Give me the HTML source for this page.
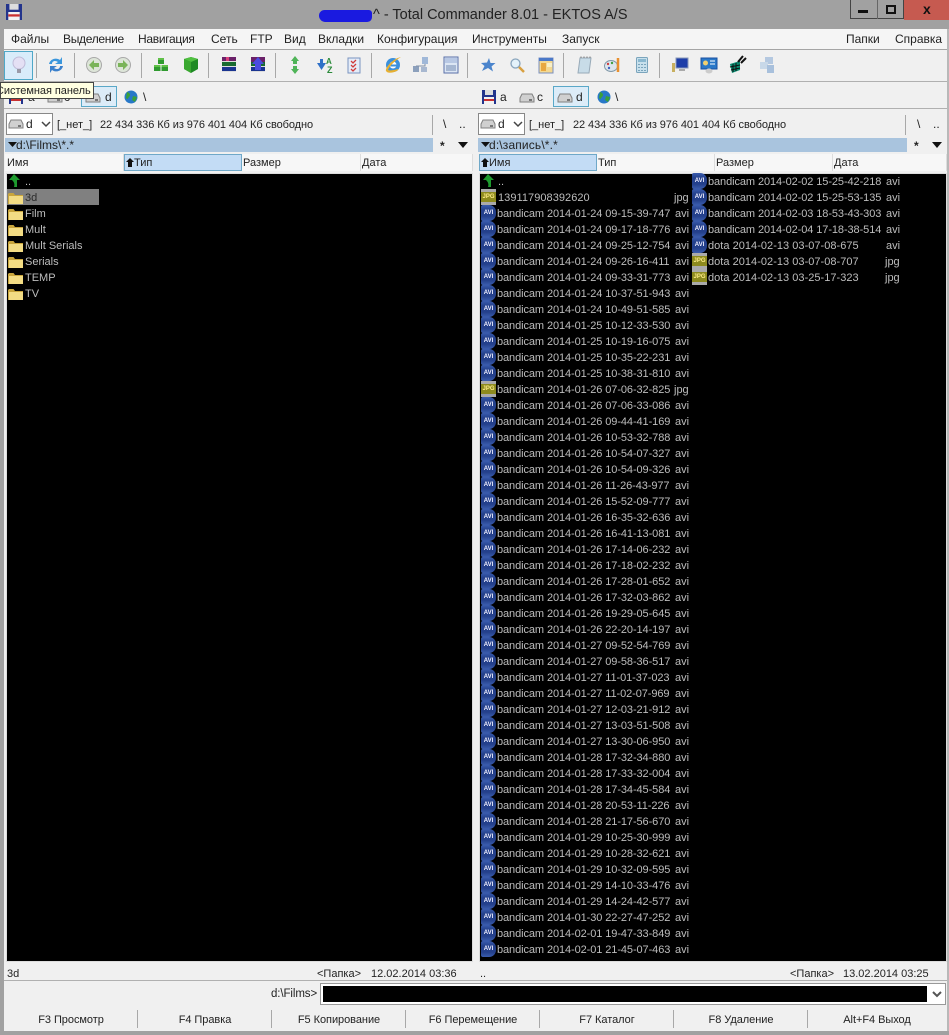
<!DOCTYPE html>
<html><head><meta charset="utf-8"><title>Total Commander</title>
<style>
html,body{margin:0;padding:0;width:949px;height:1035px;overflow:hidden;background:#f0f0f0}
body{position:relative;font-family:"Liberation Sans","Noto Sans CJK SC",sans-serif;font-size:11px;color:#222}
.a{position:absolute}
.t{position:absolute;white-space:nowrap;line-height:14px}
.m{position:absolute;top:32px;font-size:12px;line-height:14px;color:#222;white-space:nowrap}
.v{position:absolute;width:1px;background:#a8a8a8}
.ic{position:absolute;top:55px;width:20px;height:20px}
.col{position:absolute;top:173px;width:211px;color:#bdbdbd}
.col p{position:relative;margin:0;height:16px;line-height:16px;white-space:nowrap}
.col b{position:absolute;left:16px;top:1px;font-weight:400;letter-spacing:-.09px}
.col u{position:absolute;left:194px;top:1px;text-decoration:none}
.col i{position:absolute;left:0;top:0;width:15px;height:16px;font:bold 6px/16px "Liberation Sans",sans-serif;text-align:center;overflow:hidden;font-style:normal}
i.f{background:linear-gradient(#3a5cae,#24408c 30% 70%,#3a5cae);color:#eef;border-radius:2px 7px 7px 2px}
i.j{background:linear-gradient(#aaa 0 3px,#8d8a1e 3px 13px,#aaa 13px);color:#ffee88}
.h{position:absolute;top:154px;height:17px;line-height:19px;white-space:nowrap;background:#f7f7f7;border-right:1px solid #ddd;box-sizing:border-box;padding-left:1px}
.hs{background:#c3dcf5;border:1px solid #6fa8c8;line-height:17px}
.pn{position:absolute;top:173px;height:787px;background:#000;border:1px solid #ddd}
.k{position:absolute;top:1013px;width:134px;text-align:center;line-height:14px;letter-spacing:-.05px}
.fo{position:absolute;left:8px;width:16px;height:14px}
.i{letter-spacing:-.08px}
</style></head>
<body>
<svg width="0" height="0" style="position:absolute">
<symbol id="folder" viewBox="0 0 16 14"><path d="M0 3V13H15V4H7L5.500 2H1Z" fill="#c9a53c"/><path d="M1 5H15V13H1Z" fill="#f3dc84"/></symbol>
<symbol id="up" viewBox="0 0 14 14"><path d="M6 0L12 6H9V13H6C7 10 6 8 4 6H1Z" fill="#1e9a2e"/></symbol>
<symbol id="hdd" viewBox="0 0 16 10"><path d="M3 1H13L15 5V9H1V5Z" fill="#d0d0d0" stroke="#808080"/><rect x="10" y="6" width="3" height="2" fill="#777"/></symbol>
<symbol id="globe" viewBox="0 0 14 14"><circle cx="7" cy="7" r="6.500" fill="#2878c8"/><path d="M3 2C6 3 7 5 5 7S4 10 2 8ZM9 6L13 7 11 12 8 10Z" fill="#3aa03a"/></symbol>
<symbol id="floppy" viewBox="0 0 14 14"><rect width="14" height="14" fill="#23348c"/><rect x="3" y="0" width="8" height="5" fill="#ddd"/><rect x="2" y="7" width="10" height="7" fill="#f2f2f2"/><rect x="2" y="9" width="10" height="2" fill="#c83030"/></symbol>
</svg>

<!-- window frame -->
<div class="a" style="left:0;top:0;width:949px;height:29px;background:#a1a1a1"></div>
<div class="a" style="left:0;top:29px;width:4px;height:1006px;background:#a1a1a1"></div>
<div class="a" style="left:947px;top:29px;width:2px;height:1006px;background:#b8b8b8"></div>
<div class="a" style="left:0;top:1031px;width:949px;height:4px;background:#a1a1a1"></div>
<svg class="a" style="left:6px;top:4px" width="16" height="16" viewBox="0 0 14 14"><use href="#floppy"/></svg>
<div class="a" style="left:319px;top:10px;width:53px;height:12px;background:#1a1ae0;border-radius:7px 4px 6px 8px"></div>
<div class="t" style="left:373px;top:6px;font-size:14.500px;line-height:18px;color:#222">^ - Total Commander 8.01 - EKTOS A/S</div>
<div class="a" style="left:850px;top:0;width:54px;height:19px;border:1px solid #444;border-top:0;box-sizing:border-box;background:#a1a1a1"></div>
<div class="a" style="left:877px;top:0;width:1px;height:19px;background:#666"></div>
<div class="a" style="left:904px;top:0;width:45px;height:20px;background:#c65a50"></div>
<div class="a" style="left:858px;top:10px;width:10px;height:3px;background:#111"></div>
<div class="a" style="left:886px;top:5px;width:10px;height:9px;border:2px solid #111;box-sizing:border-box"></div>
<div class="t" style="left:923px;top:2px;font-size:14px;font-weight:bold;color:#111">x</div>

<!-- menu -->
<div class="a" style="left:4px;top:29px;width:943px;height:20px;background:#f5f5f5"></div>
<div class="a" style="left:4px;top:49px;width:943px;height:1px;background:#a5a5a5"></div>
<div class="m" style="left:11px">Файлы</div><div class="m" style="left:63px;letter-spacing:-.3px">Выделение</div><div class="m" style="left:138px;letter-spacing:-.3px">Навигация</div><div class="m" style="left:211px">Сеть</div><div class="m" style="left:250px">FTP</div><div class="m" style="left:284px">Вид</div><div class="m" style="left:318px">Вкладки</div><div class="m" style="left:377px">Конфигурация</div><div class="m" style="left:472px">Инструменты</div><div class="m" style="left:562px">Запуск</div><div class="m" style="left:846px">Папки</div><div class="m" style="left:895px">Справка</div>

<!-- toolbar -->
<div class="a" style="left:4px;top:51px;width:29px;height:29px;background:#d9ecfa;border:1px solid #4fa8c8;box-sizing:border-box"></div>
<div class="a" style="left:4px;top:81px;width:943px;height:1px;background:#b0b0b0"></div>
<div class="v" style="left:36px;top:53px;height:25px"></div><div class="v" style="left:74px;top:53px;height:25px"></div><div class="v" style="left:141px;top:53px;height:25px"></div><div class="v" style="left:208px;top:53px;height:25px"></div><div class="v" style="left:275px;top:53px;height:25px"></div><div class="v" style="left:371px;top:53px;height:25px"></div><div class="v" style="left:467px;top:53px;height:25px"></div><div class="v" style="left:563px;top:53px;height:25px"></div><div class="v" style="left:659px;top:53px;height:25px"></div>

<svg class="ic" style="left:9px" viewBox="0 0 20 20"><circle cx="10" cy="8" r="6" fill="#e4e0f4" stroke="#c0bcd8"/><rect x="8" y="14" width="4" height="4" fill="#9a9aa8"/></svg>
<svg class="ic" style="left:46px" viewBox="0 0 20 20"><path d="M3 9C4 4 10 2 14 5L16 2V9H9L12 7C9 5 6 6 6 9Z" fill="#3a96dc"/><path d="M17 11C16 16 10 18 6 15L4 18V11H11L8 13C11 15 14 14 14 11Z" fill="#3a80cc"/></svg>
<svg class="ic" style="left:84px" viewBox="0 0 20 20"><circle cx="10" cy="10" r="7.500" fill="#dde5d8" stroke="#a8a8a8"/><path d="M5 10L10 5V8H15V12H10V15Z" fill="#7ab458"/></svg>
<svg class="ic" style="left:113px" viewBox="0 0 20 20"><circle cx="10" cy="10" r="7.500" fill="#dde5d8" stroke="#a8a8a8"/><path d="M15 10L10 5V8H5V12H10V15Z" fill="#7ab458"/></svg>
<svg class="ic" style="left:151px" viewBox="0 0 20 20"><path d="M7 3H13V9H7ZM3 10H9.500V16H3ZM10.500 10H17V16H10.500Z" fill="#2f9a2f"/><path d="M7 3H13V5H7ZM3 10H9.500V12H3ZM10.500 10H17V12H10.500Z" fill="#60c048"/></svg>
<svg class="ic" style="left:181px" viewBox="0 0 20 20"><path d="M3 4L10 2 17 4V14L10 18 3 14Z" fill="#1f8a24"/><path d="M3 4L10 2 17 4 10 7Z" fill="#50c040"/><path d="M10 7V18L3 14V4Z" fill="#3aa830"/></svg>
<svg class="ic" style="left:219px" viewBox="0 0 20 20"><rect x="3" y="2" width="14" height="5" fill="#6a2068"/><rect x="3" y="7" width="14" height="5" fill="#186a30"/><rect x="3" y="12" width="14" height="5" fill="#1a3490"/><path d="M3 6.500H17M3 11.500H17M3 16.500H17" stroke="#ddd"/><path d="M7 2H10V6H7Z" fill="#d8407a"/></svg>
<svg class="ic" style="left:248px" viewBox="0 0 20 20"><rect x="3" y="2" width="14" height="5" fill="#6a2068"/><rect x="3" y="7" width="14" height="5" fill="#186a30"/><rect x="3" y="12" width="14" height="5" fill="#1a3490"/><path d="M3 11.500H17M3 16.500H17" stroke="#ddd"/><path d="M10 2L16 9H13V15H7V9H4Z" fill="#4b4be0"/></svg>
<svg class="ic" style="left:285px" viewBox="0 0 20 20"><path d="M10 1L14 6H12V9H8V6H6ZM10 19L6 14H8V11H12V14H14Z" fill="#4fb458"/></svg>
<svg class="ic" style="left:315px" viewBox="0 0 20 20"><path d="M2 8H5V4H8V8H11L6.500 15Z" fill="#2f70c8"/><text x="11" y="9" font-size="8" font-weight="bold" fill="#2a8a3a" font-family="Liberation Sans">A</text><text x="12" y="18" font-size="9" font-weight="bold" fill="#2a8a3a" font-family="Liberation Sans">Z</text></svg>
<svg class="ic" style="left:344px" viewBox="0 0 20 20"><rect x="4" y="3" width="12" height="15" fill="#e4ecf8" stroke="#7a94c0"/><path d="M7 6L9 8 12 5M7 10L9 12 12 9M7 14L9 16 12 13" stroke="#d03a3a" fill="none" stroke-width="1.300"/></svg>
<svg class="ic" style="left:383px" viewBox="0 0 20 20"><circle cx="10" cy="10" r="7" fill="#3a90dc"/><circle cx="10" cy="10" r="3.500" fill="#fff"/><rect x="5" y="9.500" width="11" height="2" fill="#3a90dc"/><path d="M15 14C17 16 5 20 3 16 2 13 9 4 18 2 11 6 6 12 5 15 6 16 12 15 15 14Z" fill="#e8b030"/></svg>
<svg class="ic" style="left:411px" viewBox="0 0 20 20"><rect x="11" y="2" width="6" height="7" fill="#a0b8d8"/><rect x="2" y="11" width="6" height="6" fill="#8ca0bc"/><rect x="10" y="12" width="6" height="5" fill="#a8b8d0"/><path d="M14 9V11H5V11" stroke="#8090a8" fill="none"/></svg>
<svg class="ic" style="left:441px" viewBox="0 0 20 20"><rect x="3" y="2" width="14" height="16" fill="#dce6f4" stroke="#5a70a8"/><rect x="4" y="3" width="12" height="5" fill="#b8c8e4"/><path d="M5 11H15M5 13H15M5 15H15" stroke="#7088b0"/></svg>
<svg class="ic" style="left:478px" viewBox="0 0 20 20"><path d="M11 3L12.500 8 17.500 8 13.500 11.500 15 16.500 10 13 4 16 6.500 11 3 8 9 7.500Z" fill="#4a84cc"/></svg>
<svg class="ic" style="left:507px" viewBox="0 0 20 20"><circle cx="8.500" cy="8.500" r="4.500" fill="#e4f2fa" stroke="#88a4bc" stroke-width="1.300"/><path d="M12 12L17 17" stroke="#d8a040" stroke-width="2.500"/></svg>
<svg class="ic" style="left:536px" viewBox="0 0 20 20"><rect x="3" y="3" width="14" height="15" fill="#f4d890" stroke="#7a90c0"/><rect x="3" y="3" width="14" height="3" fill="#4a78c8"/><rect x="5" y="8" width="5" height="8" fill="#e8a840"/><rect x="11" y="8" width="5" height="4" fill="#f8f0c8"/></svg>
<svg class="ic" style="left:574px" viewBox="0 0 20 20"><path d="M6 3H17L15 18H4Z" fill="#c8dce8" stroke="#98aab8"/><path d="M7 3V1.500M10 3V1.500M13 3V1.500M16 3V1.500" stroke="#777"/></svg>
<svg class="ic" style="left:603px" viewBox="0 0 20 20"><ellipse cx="8" cy="11" rx="6.500" ry="5.500" fill="#dce6ee" stroke="#8098a8"/><circle cx="5" cy="9" r="1.200" fill="#d04040"/><circle cx="9" cy="8" r="1.200" fill="#40a040"/><circle cx="6" cy="13" r="1.200" fill="#4060c0"/><path d="M15 3V17" stroke="#e89030" stroke-width="2.500"/></svg>
<svg class="ic" style="left:632px" viewBox="0 0 20 20"><rect x="4.500" y="2.500" width="11" height="15" rx="1" fill="#c8e0ec" stroke="#7aa4bc"/><rect x="6" y="4" width="8" height="3" fill="#8ab8d0"/><path d="M6 9.500H14M6 12.500H14M6 15.500H14" stroke="#7aa4bc" stroke-dasharray="2 1"/></svg>
<svg class="ic" style="left:670px" viewBox="0 0 20 20"><rect x="6" y="3" width="12" height="10" fill="#1e3ea8" stroke="#8898b8"/><rect x="2" y="8" width="3" height="9" fill="#c8b060"/><rect x="9" y="14" width="6" height="2" fill="#aaa"/></svg>
<svg class="ic" style="left:699px" viewBox="0 0 20 20"><rect x="2" y="3" width="16" height="11" fill="#2a78c8" stroke="#1a50a0"/><circle cx="6.500" cy="8" r="2.500" fill="#f0d070"/><path d="M11 6H16M11 9H16" stroke="#fff"/><ellipse cx="10" cy="16" rx="3.500" ry="2.500" fill="#ccc"/></svg>
<svg class="ic" style="left:728px" viewBox="0 0 20 20"><path d="M2 9L12 6V15L4 18Z" fill="#0a8a70"/><path d="M5 9V17M8 8V16M2 12L12 10M3 15L12 13" stroke="#111"/><path d="M10 7L15 1M13 8L18 3" stroke="#111" stroke-width="2"/></svg>
<svg class="ic" style="left:757px" viewBox="0 0 20 20"><rect x="8" y="2" width="8" height="7" fill="#b4c8e0"/><rect x="3" y="7" width="8" height="7" fill="#c8d8e8"/><rect x="10" y="10" width="7" height="8" fill="#a8c0dc"/></svg>

<!-- drive bars -->
<div class="a" style="left:4px;top:108px;width:943px;height:1px;background:#b0b0b0"></div>
<svg class="a" style="left:9px;top:90px" width="14" height="14"><use href="#floppy"/></svg>
<div class="t" style="left:28px;top:90px;font-size:12px">a</div>
<svg class="a" style="left:47px;top:93px" width="16" height="10"><use href="#hdd"/></svg>
<div class="t" style="left:64px;top:90px;font-size:12px">c</div>
<div class="a" style="left:81px;top:86px;width:36px;height:21px;background:#dcecf8;border:1px solid #5aa8c8;box-sizing:border-box"></div>
<svg class="a" style="left:85px;top:93px" width="16" height="10"><use href="#hdd"/></svg>
<div class="t" style="left:105px;top:90px;font-size:12px">d</div>
<svg class="a" style="left:124px;top:90px" width="14" height="14"><use href="#globe"/></svg>
<div class="t" style="left:143px;top:90px;font-size:12px">\</div>
<div class="t" style="left:0;top:82px;width:94px;height:17px;line-height:16px;background:#ffffe1;border:1px solid #444;box-sizing:border-box;overflow:hidden;text-indent:-5px;letter-spacing:-.05px;font-size:11px;z-index:3">Системная панель</div>

<svg class="a" style="left:482px;top:90px" width="14" height="14"><use href="#floppy"/></svg>
<div class="t" style="left:500px;top:90px;font-size:12px">a</div>
<svg class="a" style="left:519px;top:93px" width="16" height="10"><use href="#hdd"/></svg>
<div class="t" style="left:537px;top:90px;font-size:12px">c</div>
<div class="a" style="left:553px;top:86px;width:36px;height:21px;background:#dcecf8;border:1px solid #5aa8c8;box-sizing:border-box"></div>
<svg class="a" style="left:557px;top:93px" width="16" height="10"><use href="#hdd"/></svg>
<div class="t" style="left:576px;top:90px;font-size:12px">d</div>
<svg class="a" style="left:597px;top:90px" width="14" height="14"><use href="#globe"/></svg>
<div class="t" style="left:615px;top:90px;font-size:12px">\</div>

<!-- info row left -->
<div class="a" style="left:6px;top:113px;width:47px;height:22px;background:#fff;border:1px solid #888;box-sizing:border-box"></div>
<svg class="a" style="left:8px;top:119px" width="16" height="10"><use href="#hdd"/></svg>
<div class="t" style="left:26px;top:117px;font-size:12px">d</div>
<svg class="a" style="left:41px;top:120px" width="10" height="8"><path d="M1 2L5 6 9 2" stroke="#444" stroke-width="1.500" fill="none"/></svg>
<div class="t" style="left:57px;top:118px">[_нет_]</div>
<div class="t i" style="left:100px;top:118px">22 434 336 Кб из 976 401 404 Кб свободно</div>
<div class="t" style="left:443px;top:117px;font-size:12px">\</div><div class="t" style="left:459px;top:117px;font-size:12px">..</div>
<div class="v" style="left:432px;top:115px;height:20px"></div>
<!-- info row right -->
<div class="a" style="left:478px;top:113px;width:47px;height:22px;background:#fff;border:1px solid #888;box-sizing:border-box"></div>
<svg class="a" style="left:480px;top:119px" width="16" height="10"><use href="#hdd"/></svg>
<div class="t" style="left:498px;top:117px;font-size:12px">d</div>
<svg class="a" style="left:513px;top:120px" width="10" height="8"><path d="M1 2L5 6 9 2" stroke="#444" stroke-width="1.500" fill="none"/></svg>
<div class="t" style="left:529px;top:118px">[_нет_]</div>
<div class="t i" style="left:573px;top:118px">22 434 336 Кб из 976 401 404 Кб свободно</div>
<div class="t" style="left:917px;top:117px;font-size:12px">\</div><div class="t" style="left:933px;top:117px;font-size:12px">..</div>
<div class="v" style="left:905px;top:115px;height:20px"></div>

<!-- path bars -->
<div class="a" style="left:5px;top:138px;width:428px;height:14px;background:#a9c4de"></div>
<div class="a" style="left:478px;top:138px;width:429px;height:14px;background:#a9c4de"></div>
<svg class="a" style="left:8px;top:142px" width="9" height="6"><path d="M0 0H9L4.500 5Z" fill="#111"/></svg>
<svg class="a" style="left:481px;top:142px" width="9" height="6"><path d="M0 0H9L4.500 5Z" fill="#111"/></svg>
<div class="t" style="left:16px;top:138px;font-size:12px">d:\Films\*.*</div>
<div class="t" style="left:489px;top:138px;font-size:12px;letter-spacing:.15px">d:\запись\*.*</div>
<div class="t" style="left:440px;top:139px;font-size:12px;font-weight:bold">*</div>
<div class="t" style="left:914px;top:139px;font-size:12px;font-weight:bold">*</div>
<svg class="a" style="left:458px;top:142px" width="10" height="6"><path d="M0 0H10L5 6Z" fill="#111"/></svg>
<svg class="a" style="left:932px;top:142px" width="10" height="6"><path d="M0 0H10L5 6Z" fill="#111"/></svg>

<!-- headers -->
<div class="h" style="left:5px;width:119px;padding-left:2px">Имя</div>
<div class="h hs" style="left:124px;width:118px;padding-left:9px"><span style="position:absolute;left:1px;top:2px"><svg width="8" height="11"><path d="M4 1L8 5H6V10H2V5H0Z" fill="#111"/></svg></span>Тип</div>
<div class="h" style="left:242px;width:119px">Размер</div>
<div class="h" style="left:361px;width:112px">Дата</div>
<div class="h hs" style="left:479px;width:118px;padding-left:9px"><span style="position:absolute;left:1px;top:2px"><svg width="8" height="11"><path d="M4 1L8 5H6V10H2V5H0Z" fill="#111"/></svg></span>Имя</div>
<div class="h" style="left:597px;width:118px">Тип</div>
<div class="h" style="left:715px;width:118px">Размер</div>
<div class="h" style="left:833px;width:114px">Дата</div>

<!-- panels -->
<div class="pn" style="left:6px;width:465px"></div>
<div class="pn" style="left:479px;width:466px"></div>

<!-- left list -->
<svg class="a" style="left:8px;top:174px" width="14" height="14"><use href="#up"/></svg>
<div class="t" style="left:25px;top:175px;color:#bdbdbd">..</div>
<div class="a" style="left:7px;top:189px;width:92px;height:16px;background:#808080"></div>
<svg class="fo" style="top:191px"><use href="#folder"/></svg><div class="t" style="left:25px;top:191px;color:#2a2a2a">3d</div>
<svg class="fo" style="top:207px"><use href="#folder"/></svg><div class="t" style="left:25px;top:207px;color:#bdbdbd">Film</div>
<svg class="fo" style="top:223px"><use href="#folder"/></svg><div class="t" style="left:25px;top:223px;color:#bdbdbd">Mult</div>
<svg class="fo" style="top:239px"><use href="#folder"/></svg><div class="t" style="left:25px;top:239px;color:#bdbdbd">Mult Serials</div>
<svg class="fo" style="top:255px"><use href="#folder"/></svg><div class="t" style="left:25px;top:255px;color:#bdbdbd">Serials</div>
<svg class="fo" style="top:271px"><use href="#folder"/></svg><div class="t" style="left:25px;top:271px;color:#bdbdbd">TEMP</div>
<svg class="fo" style="top:287px"><use href="#folder"/></svg><div class="t" style="left:25px;top:287px;color:#bdbdbd">TV</div>

<!-- right list col 1 -->
<div class="col" style="left:481px">
<p><svg style="position:absolute;left:1px;top:1px" width="14" height="14"><use href="#up"/></svg><b style="left:17px">..</b></p>
<p><i class="j">JPG</i><b style="left:17px;letter-spacing:.05px">139117908392620</b><u style="left:193px">jpg</u></p>
<p><i class="f">AVI</i><b>bandicam 2014-01-24 09-15-39-747</b><u>avi</u></p>
<p><i class="f">AVI</i><b>bandicam 2014-01-24 09-17-18-776</b><u>avi</u></p>
<p><i class="f">AVI</i><b>bandicam 2014-01-24 09-25-12-754</b><u>avi</u></p>
<p><i class="f">AVI</i><b>bandicam 2014-01-24 09-26-16-411</b><u>avi</u></p>
<p><i class="f">AVI</i><b>bandicam 2014-01-24 09-33-31-773</b><u>avi</u></p>
<p><i class="f">AVI</i><b>bandicam 2014-01-24 10-37-51-943</b><u>avi</u></p>
<p><i class="f">AVI</i><b>bandicam 2014-01-24 10-49-51-585</b><u>avi</u></p>
<p><i class="f">AVI</i><b>bandicam 2014-01-25 10-12-33-530</b><u>avi</u></p>
<p><i class="f">AVI</i><b>bandicam 2014-01-25 10-19-16-075</b><u>avi</u></p>
<p><i class="f">AVI</i><b>bandicam 2014-01-25 10-35-22-231</b><u>avi</u></p>
<p><i class="f">AVI</i><b>bandicam 2014-01-25 10-38-31-810</b><u>avi</u></p>
<p><i class="j">JPG</i><b>bandicam 2014-01-26 07-06-32-825</b><u style="left:193px">jpg</u></p>
<p><i class="f">AVI</i><b>bandicam 2014-01-26 07-06-33-086</b><u>avi</u></p>
<p><i class="f">AVI</i><b>bandicam 2014-01-26 09-44-41-169</b><u>avi</u></p>
<p><i class="f">AVI</i><b>bandicam 2014-01-26 10-53-32-788</b><u>avi</u></p>
<p><i class="f">AVI</i><b>bandicam 2014-01-26 10-54-07-327</b><u>avi</u></p>
<p><i class="f">AVI</i><b>bandicam 2014-01-26 10-54-09-326</b><u>avi</u></p>
<p><i class="f">AVI</i><b>bandicam 2014-01-26 11-26-43-977</b><u>avi</u></p>
<p><i class="f">AVI</i><b>bandicam 2014-01-26 15-52-09-777</b><u>avi</u></p>
<p><i class="f">AVI</i><b>bandicam 2014-01-26 16-35-32-636</b><u>avi</u></p>
<p><i class="f">AVI</i><b>bandicam 2014-01-26 16-41-13-081</b><u>avi</u></p>
<p><i class="f">AVI</i><b>bandicam 2014-01-26 17-14-06-232</b><u>avi</u></p>
<p><i class="f">AVI</i><b>bandicam 2014-01-26 17-18-02-232</b><u>avi</u></p>
<p><i class="f">AVI</i><b>bandicam 2014-01-26 17-28-01-652</b><u>avi</u></p>
<p><i class="f">AVI</i><b>bandicam 2014-01-26 17-32-03-862</b><u>avi</u></p>
<p><i class="f">AVI</i><b>bandicam 2014-01-26 19-29-05-645</b><u>avi</u></p>
<p><i class="f">AVI</i><b>bandicam 2014-01-26 22-20-14-197</b><u>avi</u></p>
<p><i class="f">AVI</i><b>bandicam 2014-01-27 09-52-54-769</b><u>avi</u></p>
<p><i class="f">AVI</i><b>bandicam 2014-01-27 09-58-36-517</b><u>avi</u></p>
<p><i class="f">AVI</i><b>bandicam 2014-01-27 11-01-37-023</b><u>avi</u></p>
<p><i class="f">AVI</i><b>bandicam 2014-01-27 11-02-07-969</b><u>avi</u></p>
<p><i class="f">AVI</i><b>bandicam 2014-01-27 12-03-21-912</b><u>avi</u></p>
<p><i class="f">AVI</i><b>bandicam 2014-01-27 13-03-51-508</b><u>avi</u></p>
<p><i class="f">AVI</i><b>bandicam 2014-01-27 13-30-06-950</b><u>avi</u></p>
<p><i class="f">AVI</i><b>bandicam 2014-01-28 17-32-34-880</b><u>avi</u></p>
<p><i class="f">AVI</i><b>bandicam 2014-01-28 17-33-32-004</b><u>avi</u></p>
<p><i class="f">AVI</i><b>bandicam 2014-01-28 17-34-45-584</b><u>avi</u></p>
<p><i class="f">AVI</i><b>bandicam 2014-01-28 20-53-11-226</b><u>avi</u></p>
<p><i class="f">AVI</i><b>bandicam 2014-01-28 21-17-56-670</b><u>avi</u></p>
<p><i class="f">AVI</i><b>bandicam 2014-01-29 10-25-30-999</b><u>avi</u></p>
<p><i class="f">AVI</i><b>bandicam 2014-01-29 10-28-32-621</b><u>avi</u></p>
<p><i class="f">AVI</i><b>bandicam 2014-01-29 10-32-09-595</b><u>avi</u></p>
<p><i class="f">AVI</i><b>bandicam 2014-01-29 14-10-33-476</b><u>avi</u></p>
<p><i class="f">AVI</i><b>bandicam 2014-01-29 14-24-42-577</b><u>avi</u></p>
<p><i class="f">AVI</i><b>bandicam 2014-01-30 22-27-47-252</b><u>avi</u></p>
<p><i class="f">AVI</i><b>bandicam 2014-02-01 19-47-33-849</b><u>avi</u></p>
<p><i class="f">AVI</i><b>bandicam 2014-02-01 21-45-07-463</b><u>avi</u></p>
</div>
<!-- right list col 2 -->
<div class="col" style="left:692px">
<p><i class="f">AVI</i><b>bandicam 2014-02-02 15-25-42-218</b><u>avi</u></p>
<p><i class="f">AVI</i><b>bandicam 2014-02-02 15-25-53-135</b><u>avi</u></p>
<p><i class="f">AVI</i><b>bandicam 2014-02-03 18-53-43-303</b><u>avi</u></p>
<p><i class="f">AVI</i><b>bandicam 2014-02-04 17-18-38-514</b><u>avi</u></p>
<p><i class="f">AVI</i><b style="letter-spacing:.03px">dota 2014-02-13 03-07-08-675</b><u>avi</u></p>
<p><i class="j">JPG</i><b style="letter-spacing:.03px">dota 2014-02-13 03-07-08-707</b><u style="left:193px">jpg</u></p>
<p><i class="j">JPG</i><b style="letter-spacing:.03px">dota 2014-02-13 03-25-17-323</b><u style="left:193px">jpg</u></p>
</div>

<!-- status -->
<div class="t" style="left:7px;top:967px">3d</div>
<div class="t" style="left:317px;top:967px">&lt;Папка&gt;</div>
<div class="t" style="left:371px;top:967px">12.02.2014 03:36</div>
<div class="t" style="left:480px;top:967px">..</div>
<div class="t" style="left:790px;top:967px">&lt;Папка&gt;</div>
<div class="t" style="left:843px;top:967px">13.02.2014 03:25</div>
<div class="a" style="left:4px;top:980px;width:943px;height:1px;background:#b0b0b0"></div>

<!-- command line -->
<div class="t" style="left:271px;top:987px;font-size:11.500px;letter-spacing:-.1px">d:\Films&gt;</div>
<div class="a" style="left:320px;top:983px;width:626px;height:22px;background:#fff;border:1px solid #999;box-sizing:border-box"></div>
<div class="a" style="left:323px;top:986px;width:604px;height:16px;background:#000"></div>
<svg class="a" style="left:932px;top:990px" width="10" height="8"><path d="M1 2L5 6 9 2" stroke="#555" stroke-width="2" fill="none"/></svg>

<!-- function keys -->
<div class="k" style="left:4px">F3 Просмотр</div>
<div class="k" style="left:138px">F4 Правка</div>
<div class="k" style="left:272px">F5 Копирование</div>
<div class="k" style="left:406px">F6 Перемещение</div>
<div class="k" style="left:540px">F7 Каталог</div>
<div class="k" style="left:674px">F8 Удаление</div>
<div class="k" style="left:810px">Alt+F4 Выход</div>
<div class="v" style="left:137px;top:1010px;height:18px"></div><div class="v" style="left:271px;top:1010px;height:18px"></div><div class="v" style="left:405px;top:1010px;height:18px"></div><div class="v" style="left:539px;top:1010px;height:18px"></div><div class="v" style="left:673px;top:1010px;height:18px"></div><div class="v" style="left:807px;top:1010px;height:18px"></div>
</body></html>
